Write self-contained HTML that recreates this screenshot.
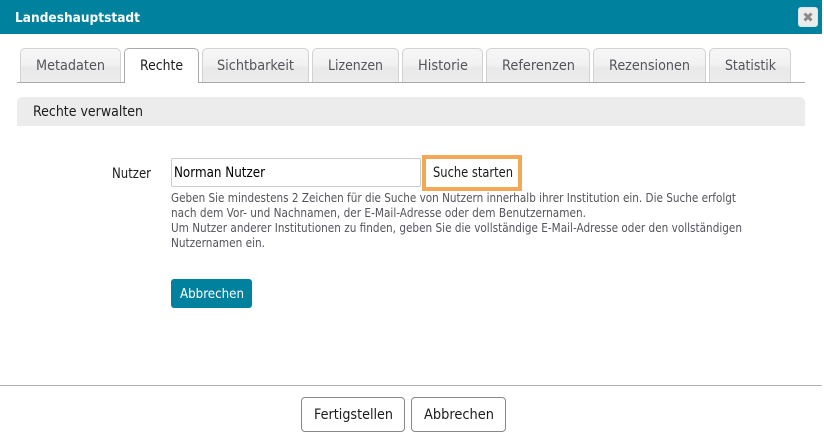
<!DOCTYPE html>
<html><head><meta charset="utf-8"><style>
html,body{margin:0;padding:0;background:#fff;width:824px;height:444px;overflow:hidden}
svg{position:absolute;left:0;top:0}
.b{position:absolute;box-sizing:border-box}
.tab{top:48px;height:34px;border:1px solid #d2d2d2;border-bottom:0;border-radius:5px 5px 0 0;background:linear-gradient(#f6f6f6 0,#f2f2f2 45%,#e9e9e9 60%,#ececec 100%)}
text{font-family:"DejaVu Sans","Liberation Sans",sans-serif}
</style></head><body>
<div class="b" style="left:0;top:0;width:822px;height:34px;background:#00829f"></div>
<div class="b" style="left:798px;top:7px;width:20px;height:20px;background:#ececec;border-radius:3px;border:1px solid #d8e4e8"></div>
<div class="b" style="left:17px;top:82px;width:788px;height:1px;background:#aaa"></div>
<div class="b tab" style="left:20px;width:101px"></div>
<div class="b" style="left:124px;top:48px;width:75px;height:35px;background:#fff;border:1px solid #aaa;border-bottom:0;border-radius:5px 5px 0 0"></div>
<div class="b tab" style="left:202px;width:107px"></div>
<div class="b tab" style="left:312px;width:87px"></div>
<div class="b tab" style="left:402px;width:81px"></div>
<div class="b tab" style="left:486px;width:104px"></div>
<div class="b tab" style="left:593px;width:113px"></div>
<div class="b tab" style="left:709px;width:82px"></div>
<div class="b" style="left:17px;top:97px;width:788px;height:29px;background:#ececec;border-radius:5px 5px 0 0"></div>
<div class="b" style="left:171px;top:158px;width:250px;height:29px;background:#fff;border:1px solid #ccc;border-radius:2px"></div>
<div class="b" style="left:422px;top:155px;width:100px;height:36px;background:#fff;border:4px solid #f2a955"></div>
<div class="b" style="left:171px;top:279px;width:81px;height:29px;background:#00829f;border-radius:3px"></div>
<div class="b" style="left:0;top:385px;width:822px;height:1px;background:#b0b0b0"></div>
<div class="b" style="left:301px;top:397px;width:104px;height:35px;background:#fff;border:1px solid #888;border-radius:4px"></div>
<div class="b" style="left:411px;top:397px;width:95px;height:35px;background:#fff;border:1px solid #888;border-radius:4px"></div>
<svg width="824" height="444" viewBox="0 0 824 444" xmlns="http://www.w3.org/2000/svg">
<path d="M804.5 13.5l7 7M811.5 13.5l-7 7" stroke="#8a8a8a" stroke-width="3" fill="none"/>
<text x="15" y="22" font-size="13.5" font-weight="700" fill="#fff" textLength="125" lengthAdjust="spacingAndGlyphs">Landeshauptstadt</text>
<g font-size="14" fill="#54545c">
<text x="36" y="70" textLength="69" lengthAdjust="spacingAndGlyphs">Metadaten</text>
<text x="217" y="70" textLength="77" lengthAdjust="spacingAndGlyphs">Sichtbarkeit</text>
<text x="328" y="70" textLength="55" lengthAdjust="spacingAndGlyphs">Lizenzen</text>
<text x="418" y="70" textLength="50" lengthAdjust="spacingAndGlyphs">Historie</text>
<text x="502" y="70" textLength="73" lengthAdjust="spacingAndGlyphs">Referenzen</text>
<text x="609" y="70" textLength="81" lengthAdjust="spacingAndGlyphs">Rezensionen</text>
<text x="725" y="70" textLength="51" lengthAdjust="spacingAndGlyphs">Statistik</text>
</g>
<g font-size="14" fill="#1c1c1c">
<text x="140" y="70" textLength="43" lengthAdjust="spacingAndGlyphs">Rechte</text>
<text x="33" y="116" textLength="110" lengthAdjust="spacingAndGlyphs">Rechte verwalten</text>
<text x="112" y="178" textLength="39" lengthAdjust="spacingAndGlyphs">Nutzer</text>
<text x="174" y="177" textLength="91" lengthAdjust="spacingAndGlyphs" fill="#000">Norman Nutzer</text>
<text x="433" y="177" textLength="80" lengthAdjust="spacingAndGlyphs">Suche starten</text>
<text x="314" y="419" textLength="79" lengthAdjust="spacingAndGlyphs">Fertigstellen</text>
<text x="424" y="419" textLength="70" lengthAdjust="spacingAndGlyphs">Abbrechen</text>
</g>
<text x="180" y="298" font-size="13.5" fill="#fff" textLength="64" lengthAdjust="spacingAndGlyphs">Abbrechen</text>
<g font-size="12.5" fill="#54545c">
<text x="171" y="202" textLength="565" lengthAdjust="spacingAndGlyphs">Geben Sie mindestens 2 Zeichen für die Suche von Nutzern innerhalb ihrer Institution ein. Die Suche erfolgt</text>
<text x="171" y="217" textLength="415" lengthAdjust="spacingAndGlyphs">nach dem Vor- und Nachnamen, der E-Mail-Adresse oder dem Benutzernamen.</text>
<text x="171" y="232" textLength="571" lengthAdjust="spacingAndGlyphs">Um Nutzer anderer Institutionen zu finden, geben Sie die vollständige E-Mail-Adresse oder den vollständigen</text>
<text x="171" y="247" textLength="94" lengthAdjust="spacingAndGlyphs">Nutzernamen ein.</text>
</g>
</svg>
</body></html>
